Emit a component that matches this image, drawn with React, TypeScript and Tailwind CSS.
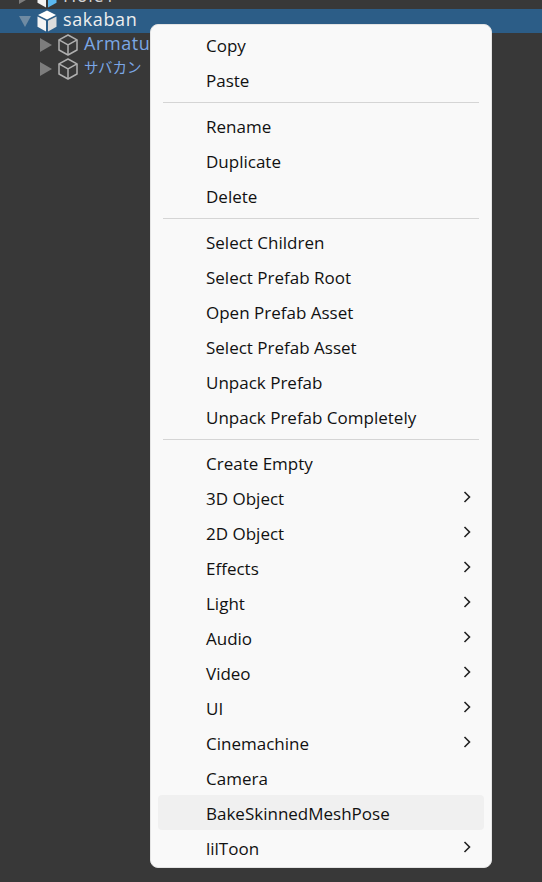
import React from 'react';

type MenuEntry = { label: string; sub?: boolean; hover?: boolean } | 'sep';

const menu: MenuEntry[] = [
  { label: 'Copy' },
  { label: 'Paste' },
  'sep',
  { label: 'Rename' },
  { label: 'Duplicate' },
  { label: 'Delete' },
  'sep',
  { label: 'Select Children' },
  { label: 'Select Prefab Root' },
  { label: 'Open Prefab Asset' },
  { label: 'Select Prefab Asset' },
  { label: 'Unpack Prefab' },
  { label: 'Unpack Prefab Completely' },
  'sep',
  { label: 'Create Empty' },
  { label: '3D Object', sub: true },
  { label: '2D Object', sub: true },
  { label: 'Effects', sub: true },
  { label: 'Light', sub: true },
  { label: 'Audio', sub: true },
  { label: 'Video', sub: true },
  { label: 'UI', sub: true },
  { label: 'Cinemachine', sub: true },
  { label: 'Camera' },
  { label: 'BakeSkinnedMeshPose', hover: true },
  { label: 'lilToon', sub: true },
];

function SolidCube({ right = '#dcdcdc' }: { right?: string }) {
  return (
    <svg width="20" height="22" viewBox="0 0 20 22" className="shrink-0">
      <path d="M10 0.5 L19 5 L10 9.5 L1 5 Z" fill="#ffffff" />
      <path d="M0.5 6.5 L9 10.8 L9 21.5 L0.5 16.8 Z" fill="#f4f4f4" />
      <path d="M19.5 6.5 L11 10.8 L11 21.5 L19.5 16.8 Z" fill={right} />
    </svg>
  );
}

function OutlineCube() {
  return (
    <svg width="20" height="22" viewBox="0 0 20 22" fill="none" stroke="#b0b0b0" strokeWidth="1.5" className="shrink-0">
      <path d="M10 1 L19 5.8 L19 16 L10 21 L1 16 L1 5.8 Z" strokeLinejoin="round" />
      <path d="M1 5.8 L10 10.8 L19 5.8 M10 10.8 L10 21" />
    </svg>
  );
}

function TreeRow({
  indent,
  arrow,
  selected,
  children,
}: {
  indent: string;
  arrow: React.ReactNode;
  selected?: boolean;
  children: React.ReactNode;
}) {
  return (
    <div className={`flex h-6 items-center ${indent} ${selected ? 'bg-[#2c5d87]' : ''}`}>
      {arrow}
      {children}
    </div>
  );
}

const arrowRight = (
  <svg width="12" height="14" viewBox="0 0 12 14" className="mr-[6px] shrink-0">
    <path d="M0 0 L12 7 L0 14 Z" fill="#7d7d7d" />
  </svg>
);

const arrowDown = (
  <svg width="12" height="11" viewBox="0 0 12 11" className="mr-[6px] shrink-0">
    <path d="M0 0 L12 0 L6 11 Z" fill="#6f8ba3" />
  </svg>
);

export default function App() {
  return (
    <div
      className="relative h-[882px] w-[542px] overflow-hidden bg-[#383838]"
      style={{ fontFamily: '"Open Sans", "Noto Sans CJK JP", sans-serif' }}
    >
      <div className="-mt-[15px] text-[18px] tracking-[0.6px]">
        <TreeRow indent="pl-[19px]" arrow={arrowRight}>
          <SolidCube right="#5bb8f0" />
          <span className="mb-[3px] ml-[6px] text-[#d2d2d2]">Hole1</span>
        </TreeRow>
        <TreeRow indent="pl-[19px]" arrow={arrowDown} selected>
          <SolidCube />
          <span className="mb-[3px] ml-[6px] text-[#eeeeee]">sakaban</span>
        </TreeRow>
        <TreeRow indent="pl-[40px]" arrow={arrowRight}>
          <OutlineCube />
          <span className="mb-[3px] ml-[6px] text-[#7ba7e6]">Armature</span>
        </TreeRow>
        <TreeRow indent="pl-[40px]" arrow={arrowRight}>
          <OutlineCube />
          <span className="mb-[3px] ml-[6px] text-[14.5px] tracking-normal text-[#7ba7e6]">サバカン</span>
        </TreeRow>
      </div>

      <div className="absolute left-[150px] top-[24px] h-[844px] w-[342px] rounded-lg border border-[#e4e4e4] bg-[#f9f9f9] px-[7px] pt-[2px]">
        {menu.map((item, i) =>
          item === 'sep' ? (
            <div key={i} className="flex h-[11px] items-center px-[5px]">
              <div className="h-px w-full bg-[#d5d5d5]" />
            </div>
          ) : (
            <div
              key={i}
              className={`flex h-[35px] items-center justify-between rounded pl-[48px] pr-[13px] pt-[3px] text-[17px] text-[#111111] ${
                item.hover ? 'bg-[#f0f0f0]' : ''
              }`}
            >
              <span>{item.label}</span>
              {item.sub && (
                <svg width="8" height="12" viewBox="0 0 8 12" fill="none" stroke="#222222" strokeWidth="1.6" className="mb-[5px]">
                  <path d="M1.5 1 L6.5 6 L1.5 11" />
                </svg>
              )}
            </div>
          ),
        )}
      </div>
    </div>
  );
}
